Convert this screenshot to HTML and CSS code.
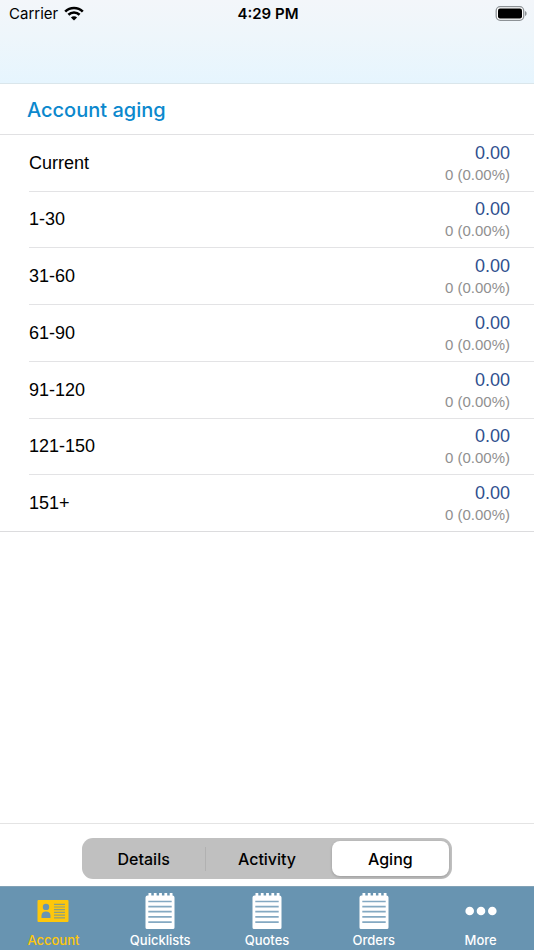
FILE: index.html
```html
<!DOCTYPE html>
<html lang="en">
<head>
<meta charset="utf-8">
<meta name="viewport" content="width=device-width, initial-scale=1">
<title>Account aging</title>
<link rel="stylesheet" href="styles.css">
</head>
<body>
<div class="app">
  <header class="top">
    <div class="status">
      <span class="carrier">Carrier
        <svg class="wifi" viewBox="0 0 20 15" aria-hidden="true">
          <path d="M1.2 5.600a12.600 12.600 0 0 1 17.600 0M4.400 8.800a8 8 0 0 1 11.200 0" fill="none" stroke="#000" stroke-width="2.600"/>
          <path d="M10 14.600 6.900 11.500a4.400 4.400 0 0 1 6.200 0z"/>
        </svg>
      </span>
      <span class="clock">4:29 PM</span>
      <svg class="battery" viewBox="0 0 32 15" aria-hidden="true">
        <rect x="1.200" y=".7" width="27.500" height="13.600" rx="4" fill="#fff" stroke="#8d9296" stroke-width="1.300"/>
        <rect x="3" y="2.400" width="24" height="10.200" rx="2"/>
        <path d="M30 5v5c2.200-.8 2.200-4.200 0-5z" fill="#8d9296"/>
      </svg>
    </div>
  </header>
  <main class="content">
    <h1 class="title">Account aging</h1>
    <div class="ledger">
      <table class="aging">
        <tr><th scope="row">Current</th><td><span class="amount">0.00</span><span class="share">0 (0.00%)</span></td></tr>
        <tr><th scope="row">1-30</th><td><span class="amount">0.00</span><span class="share">0 (0.00%)</span></td></tr>
        <tr><th scope="row">31-60</th><td><span class="amount">0.00</span><span class="share">0 (0.00%)</span></td></tr>
        <tr><th scope="row">61-90</th><td><span class="amount">0.00</span><span class="share">0 (0.00%)</span></td></tr>
        <tr><th scope="row">91-120</th><td><span class="amount">0.00</span><span class="share">0 (0.00%)</span></td></tr>
        <tr><th scope="row">121-150</th><td><span class="amount">0.00</span><span class="share">0 (0.00%)</span></td></tr>
        <tr><th scope="row">151+</th><td><span class="amount">0.00</span><span class="share">0 (0.00%)</span></td></tr>
      </table>
    </div>
  </main>
  <div class="toolbar">
    <div class="segments">
      <button class="segment" type="button">Details</button>
      <button class="segment divided" type="button">Activity</button>
      <button class="segment selected" type="button" aria-pressed="true">Aging</button>
    </div>
  </div>
  <svg width="0" height="0" class="symbols" aria-hidden="true">
    <symbol id="notepad" viewBox="0 0 32 38">
      <path fill="#fff" d="M3.500 3.500h1V1h2.800v2.500h2.500V1h2.800v2.500h2.500V1h2.800v2.500h2.500V1h2.800v2.500h2.500V1h2.800v2.500A2 2 0 0 1 30.500 5.500v30a1.500 1.500 0 0 1-1.500 1.500h-26a1.500 1.500 0 0 1-1.500-1.500v-30a2 2 0 0 1 2-2z"/>
      <path stroke="#84a9c2" stroke-width="1.700" d="M4.300 9.500h23.400M4.300 14.600h23.400M4.300 19.700h23.400M4.300 24.900h23.400M4.300 30.200h23.400"/>
    </symbol>
  </svg>
  <nav class="tabs">
    <a class="tab active" href="#account">
      <svg class="icon" viewBox="0 0 32 38" aria-hidden="true">
        <rect x=".5" y="8" width="31" height="22" rx="1" fill="#fec70b"/>
        <g fill="#6894b1"><circle cx="9" cy="14.900" r="3.200"/><path d="M4.500 26v-2.500c0-2.500 2-4 4.500-4s4.500 1.500 4.500 4V26z"/></g>
        <path stroke="#8b9f82" stroke-width="1.200" d="M17 12.300h11M17 15h11M17 17.700h11M17 20.400h11M17 23.100h11M17 25.800h11"/>
      </svg>
      <span>Account</span>
    </a>
    <a class="tab" href="#quicklists"><svg class="icon" aria-hidden="true"><use href="#notepad"/></svg><span>Quicklists</span></a>
    <a class="tab" href="#quotes"><svg class="icon" aria-hidden="true"><use href="#notepad"/></svg><span>Quotes</span></a>
    <a class="tab" href="#orders"><svg class="icon" aria-hidden="true"><use href="#notepad"/></svg><span>Orders</span></a>
    <a class="tab" href="#more">
      <svg class="icon" viewBox="0 0 32 38" aria-hidden="true"><g fill="#fff"><circle cx="4.700" cy="19" r="4.300"/><circle cx="16" cy="19" r="4.300"/><circle cx="27.300" cy="19" r="4.300"/></g></svg>
      <span>More</span>
    </a>
  </nav>
</div>
</body>
</html>
```
FILE: styles.css
```css
* { box-sizing: border-box; }
body {
  margin: 0;
  background: #fff;
  color: #000;
  font-family: Inter, "Liberation Sans", sans-serif;
}
.app {
  min-height: 100vh;
  display: flex;
  flex-direction: column;
}
.top {
  min-height: 84px;
  background: linear-gradient(#f3f6fa, #eef6fb 45%, #e6f5fe);
  border-bottom: 1px solid #dae6eb;
}
.status {
  display: grid;
  grid-template-columns: 1fr auto 1fr;
  align-items: center;
  height: 26px;
  padding: 0 7px 0 9px;
  font-size: 15px;
}
.carrier { display: flex; align-items: center; gap: 6px; }
.wifi { width: 20px; height: 15px; }
.clock { font-weight: 600; }
.battery { width: 32px; height: 15px; justify-self: end; }
.content { flex: 1; }
.title {
  margin: 0;
  padding: 2px 27px 0;
  font-size: 20px;
  font-weight: 500;
  line-height: 48px;
  color: #0b88cd;
  border-bottom: 1px solid #e1e1e3;
}
.ledger {
  padding-left: 29px;
  border-bottom: 1px solid #dcdcde;
}
.aging {
  width: 100%;
  height: 396px;
  border-collapse: collapse;
  font-family: "Liberation Sans", Arial, sans-serif;
}
.aging th {
  padding: 1px 0 0;
  font-size: 18px;
  font-weight: 400;
  text-align: left;
}
.aging td { padding: 2px 24px 0 0; text-align: right; }
.aging tr + tr { border-top: 1px solid #e3e3e5; }
.amount, .share { display: block; line-height: 22px; }
.amount { font-size: 18px; color: #30508f; }
.share { font-size: 15px; color: #909090; }
.toolbar {
  padding: 14px 82px 7px;
  border-top: 1px solid #e4e4e4;
}
.segments {
  display: grid;
  grid-template-columns: repeat(3, 1fr);
  min-height: 41px;
  border-radius: 11px;
  background: #c0c0c0;
}
.segment {
  padding: 0;
  border: 0;
  border-radius: 8px;
  background: none;
  color: #000;
  font: 500 16px Inter, "Liberation Sans", sans-serif;
}
.divided {
  background: linear-gradient(#b1b1b1, #b1b1b1) left center / 1px 24px no-repeat;
}
.selected { margin: 3px; background: #fff; box-shadow: 0 1px 3px #00000033; }
.symbols { position: absolute; }
.tabs {
  display: grid;
  grid-template-columns: repeat(5, 1fr);
  min-height: 64px;
  background: #6894b1;
  border-top: 1px solid #82a2b6;
}
.tab {
  display: flex;
  flex-direction: column;
  align-items: center;
  gap: 2px;
  padding-top: 5px;
  color: #fff;
  font-size: 13px;
  font-weight: 500;
  line-height: 16px;
  text-decoration: none;
}
.active { color: #fec70b; }
.icon { width: 32px; height: 38px; }
```
